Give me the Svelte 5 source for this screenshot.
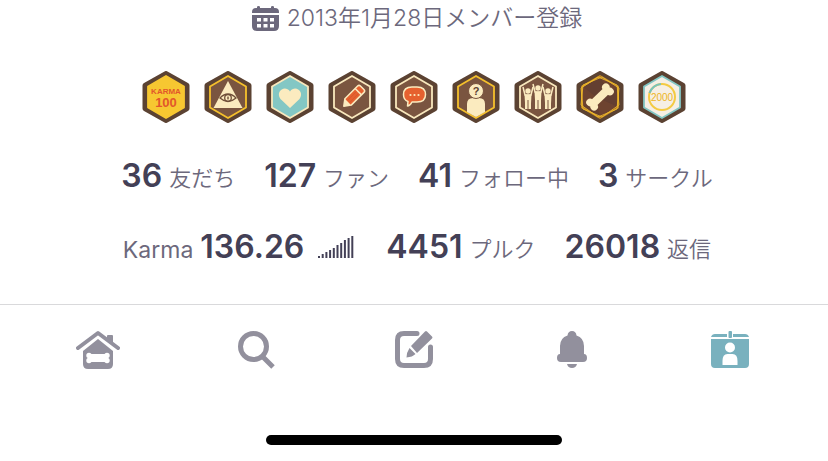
<script lang="ts">
    const stats = [
        {value: "36", label: "友だち"},
        {value: "127", label: "ファン"},
        {value: "41", label: "フォロー中"},
        {value: "3", label: "サークル"}
    ];

    const badges = ["karma", "eye", "heart", "pencil", "chat", "mystery", "crowd", "bone", "plurks"];
    const names = ["Karma 100", "Eye", "Heart", "Pencil", "Chat", "Mystery", "Friends", "Bone", "2000"];

    const hex = "24,5 42,15.5 42,36.5 24,47 6,36.5 6,15.5";
    const bars = [2, 4, 6, 8, 10, 13, 15, 18, 20, 22];

    const fills: Record<string, string> = {karma: "#f7c731", heart: "#83c7c4", plurks: "#f6efe4", bone: "#643f31"};
    const lines: Record<string, string> = {
        karma: "#f7c731",
        eye: "#f5c02c",
        mystery: "#f5c02c",
        bone: "#c98e25",
        plurks: "#83c7c4"
    };
</script>

<main>
    <p class="joined">
        <svg width="27" height="25" viewBox="0 0 27 25" aria-hidden="true">
            <path class="ink" d="M0 7V6q0-4 4-4h1V1q0-1 1.500-1T8 1v1h11V1q0-1 1.500-1T22 1v1h1q4 0 4 4v1zM0 9h27v11q0 5-5 5H5q-5 0-5-5z"/>
            <path class="hole" d="M5 12h4v3.500H5zM11.500 12h4v3.500h-4zM18 12h4v3.500h-4zM5 18h4v3.500H5zM11.500 18h4v3.500h-4zM18 18h4v3.500h-4z"/>
        </svg>
        <span>2013年1月28日メンバー登録</span>
    </p>

    <ul class="badges">
        {#each badges as badge, i}
            <li>
                <svg width="48" height="52" viewBox="0 0 48 52" role="img" aria-label={names[i]}>
                    <polygon points="24,3 44.500,14.500 44.500,37.500 24,49 3.500,37.500 3.500,14.500" fill="#5b4232" stroke="#5b4232" stroke-width="6" stroke-linejoin="round"/>
                    <polygon points={hex} fill={fills[badge] ?? "#7a5540"} stroke={lines[badge] ?? "#f9e8bd"} stroke-width="1.800" stroke-linejoin="round"/>
                    {#if badge === "karma"}
                        <text x="24" y="23" font-size="8" font-weight="700" fill="#e2572b">KARMA</text>
                        <text x="24" y="36" font-size="13" font-weight="700" fill="#e2572b">100</text>
                    {:else if badge === "eye"}
                        <path d="M24 10 38.500 37h-29z" fill="#fbebbf"/>
                        <path d="M16 27q8-8 16 0-8 7-16 0z" fill="none" stroke="#70503a" stroke-width="1.300"/>
                        <circle cx="24" cy="27" r="3.300" fill="none" stroke="#70503a" stroke-width="1.300"/>
                        <ellipse cx="24" cy="27" rx=".8" ry="1.800" fill="#70503a"/>
                    {:else if badge === "heart"}
                        <path d="M24 37 14.500 28C9 20.500 19 13.500 24 20.500 29 13.500 39 20.500 33.500 28z" fill="#fbebbf"/>
                    {:else if badge === "pencil"}
                        <g transform="rotate(45 25 26)">
                            <path d="M20.500 15q0-2 2-2h5q2 0 2 2v18L25 39l-4.500-6z" fill="#e6612f" stroke="#fbebbf" stroke-width="1.500" stroke-linejoin="round"/>
                            <path d="M20.500 18.500h9" stroke="#fbebbf" stroke-width="1.500"/>
                            <path d="M20.500 33h9L25 39z" fill="#fbebbf"/>
                            <path d="M23.500 20v12M26.500 20v12" stroke="#c95229" stroke-width=".5"/>
                        </g>
                    {:else if badge === "chat"}
                        <path d="M22 16h5q8.500 0 8.500 7.500T27 31h-5q-2 4-4.500 4l.5-4.500q-4.500-1.500-4.500-7Q13.500 16 22 16z" fill="#e6612f" stroke="#fbebbf" stroke-width="1.500" stroke-linejoin="round"/>
                        <circle cx="20.500" cy="24" r="1.100" fill="#fbebbf"/>
                        <circle cx="24.500" cy="24" r="1.100" fill="#fbebbf"/>
                        <circle cx="28.500" cy="24" r="1.100" fill="#fbebbf"/>
                    {:else if badge === "mystery"}
                        <path d="M15 41V33q0-6 6-6h6q6 0 6 6v8l-9 5z" fill="#fbebbf"/>
                        <circle cx="24" cy="20" r="7.500" fill="#fbebbf" stroke="#7a5540"/>
                        <text x="24" y="24" font-size="11" font-weight="700" fill="#5b4232">?</text>
                    {:else if badge === "crowd"}
                        {#each [[14, 20], [24, 17], [34, 20]] as [x, y]}
                            <circle cx={x} cy={y} r="2.700" fill="#fbebbf"/>
                            <path d="M{x - 5} {y - 4}l2 8h6l2-8" fill="none" stroke="#fbebbf" stroke-width="1.500"/>
                            <path d="M{x - 3.500} {y + 3.500}h7l-.5 9V38h-2.500V29h-1v9h-2.500V{y + 12}z" fill="#fbebbf"/>
                        {/each}
                    {:else if badge === "bone"}
                        <path d="M24 5 33 23 42 15M6 15l14 11L6 36M24 47l-4-21 22 10" fill="#77472f" opacity=".5"/>
                        <polygon points="22,6 41,14 43,34 26,46 7,38 5,17" fill="none" stroke="#f5c02c" stroke-width=".8"/>
                        <polygon points="26,6 43,17 41,38 22,46 5,34 7,14" fill="none" stroke="#f5c02c" stroke-width=".8"/>
                        <g transform="rotate(-44 24 26)" fill="#fbebbf">
                            <rect x="13" y="22" width="22" height="8"/>
                            <circle cx="13" cy="23" r="3.800"/>
                            <circle cx="13" cy="29" r="3.800"/>
                            <circle cx="35" cy="23" r="3.800"/>
                            <circle cx="35" cy="29" r="3.800"/>
                        </g>
                    {:else}
                        <circle cx="24" cy="26" r="13" fill="none" stroke="#f4cb42" stroke-width="2"/>
                        <path d="M11.500 22Q14.500 14 23 13" fill="none" stroke="#78c3bd" stroke-width="2"/>
                        <text x="24" y="30" font-size="10" fill="#edb51f">2000</text>
                    {/if}
                </svg>
            </li>
        {/each}
    </ul>

    <div class="stats">
        {#each stats as {value, label}}
            <a href="#stats"><strong>{value}</strong><span>{label}</span></a>
        {/each}
    </div>

    <div class="stats totals">
        <a href="#karma">
            <span class="latin">Karma</span><strong>136.26</strong>
            <svg class="chart" width="36" height="22" viewBox="0 0 36 22" aria-hidden="true">
                {#each bars as h, i}
                    <rect x={i * 3.700} y={22 - h} width="2" height={h}/>
                {/each}
            </svg>
        </a>
        <a href="#plurks"><strong>4451</strong><span>プルク</span></a>
        <a href="#replies"><strong>26018</strong><span>返信</span></a>
    </div>
</main>

<nav>
    <a href="#home" aria-label="Home">
        <svg width="44" height="40" viewBox="0 0 44 40">
            <path d="M31 6q0-1 1-1h4q1 0 1 1v9l-6-4z"/>
            <path d="M2 18 22 3l20 15" class="line"/>
            <path d="M22 9 37 21v13q0 5-5 5H12q-5 0-5-5V21z"/>
            <g class="hole">
                <rect x="13" y="24" width="18" height="8"/>
                <circle cx="13" cy="25.500" r="2.700"/>
                <circle cx="13" cy="30.500" r="2.700"/>
                <circle cx="31" cy="25.500" r="2.700"/>
                <circle cx="31" cy="30.500" r="2.700"/>
            </g>
        </svg>
    </a>
    <a href="#search" aria-label="Search">
        <svg width="38" height="40" viewBox="0 0 38 40">
            <circle cx="16.500" cy="16.500" r="13" fill="none" stroke="#92909d" stroke-width="5"/>
            <path d="m26 27 10 10" fill="none" stroke="#92909d" stroke-width="5"/>
        </svg>
    </a>
    <a href="#write" aria-label="Write">
        <svg width="38" height="40" viewBox="0 0 38 40">
            <path d="M22 3.500H9Q2.500 3.500 2.500 10v19q0 6.500 6.500 6.500h20q6.500 0 6.500-6.500V17" fill="none" stroke="#92909d" stroke-width="5" stroke-linecap="round"/>
            <path class="hole" d="M29 1 38 9 20 29 8 30z"/>
            <path d="M30 1.500q1-1 2 0l5 5q1 1 0 2L22 23l-6-7zM14.500 18l6 6q-3 3-9 3.500 0-5 3-9.500z"/>
        </svg>
    </a>
    <a href="#alerts" aria-label="Notifications">
        <svg width="32" height="40" viewBox="0 0 32 40">
            <path d="M11.500 5.500Q12 1 16 1t4.500 4.500Q28 8 28 16v8q3 0 3 4 0 4-4 4H5q-4 0-4-4 0-4 3-4v-8q0-8 7.500-10.500zM11 34h10q-1 4-5 4t-5-4z"/>
        </svg>
    </a>
    <a href="#profile" aria-label="Profile" aria-current="page">
        <svg width="38" height="40" viewBox="0 0 38 40">
            <path d="M4 4h12v3H0q1-3 4-3zM22 4h12q3 0 4 3H22zM0 9h38v25q0 4-4 4H4q-4 0-4-4z"/>
            <path class="hole" d="M16 1h6v8h-6z"/>
            <rect x="17.500" y="1" width="3.500" height="7" rx="1"/>
            <circle cx="19" cy="17.500" r="5" class="hole"/>
            <path class="hole" d="M11.500 35v-4q0-7 5-7h5q5 0 5 7v4z"/>
        </svg>
    </a>
</nav>

<div class="home-bar"></div>

<style>
    :global(body) {
        margin: 0;
        background: #fff;
        color: #6c687c;
        font-family: Inter, "Noto Sans CJK JP", sans-serif;
    }

    main {
        display: flex;
        flex-direction: column;
        align-items: center;
    }

    a {
        color: inherit;
        text-decoration: none;
    }

    .joined {
        display: flex;
        align-items: center;
        gap: 8px;
        height: 36px;
        margin: 0;
        padding-left: 6px;
        font-family: Inter, "Noto Sans CJK JP", sans-serif;
        font-size: 23px;
        font-weight: 350;
        line-height: 36px;
    }

    .ink {
        fill: #6c687c;
    }

    .hole {
        fill: #fff;
    }

    .badges {
        display: flex;
        gap: 14px;
        margin: 35px 0 0;
        padding: 0;
        list-style: none;
    }

    .badges svg {
        display: block;
    }

    .badges text {
        text-anchor: middle;
        font-family: "Liberation Sans", sans-serif;
    }

    .stats {
        display: flex;
        gap: 29px;
        margin-top: 33px;
        padding-left: 6px;
    }

    .totals {
        margin-top: 31px;
    }

    .stats a {
        display: flex;
        align-items: baseline;
        gap: 7px;
        height: 40px;
    }

    .stats span {
        align-self: center;
        font-family: "Noto Sans CJK JP", sans-serif;
        font-size: 22px;
        font-weight: 350;
        line-height: 40px;
    }

    .stats strong {
        color: #434056;
        font-size: 32px;
        font-weight: 600;
        line-height: 40px;
    }

    .stats .latin {
        align-self: baseline;
        font-family: Inter, sans-serif;
        font-size: 23px;
        font-weight: 400;
        line-height: 24px;
    }

    .chart {
        margin: 0 3px 0 7px;
        fill: #434056;
    }

    nav {
        display: flex;
        margin-top: 37px;
        padding: 25px 19px 0;
        border-top: 1px solid #d9d9db;
    }

    nav a {
        display: flex;
        flex: 1;
        justify-content: center;
        fill: #92909d;
    }

    nav a[aria-current] {
        fill: #79b1be;
    }

    nav .line {
        fill: none;
        stroke: #92909d;
        stroke-width: 4;
        stroke-linecap: round;
        stroke-linejoin: round;
    }

    .home-bar {
        width: 296px;
        height: 10px;
        margin: 65px auto 0;
        border-radius: 5px;
        background: #000;
    }
</style>
